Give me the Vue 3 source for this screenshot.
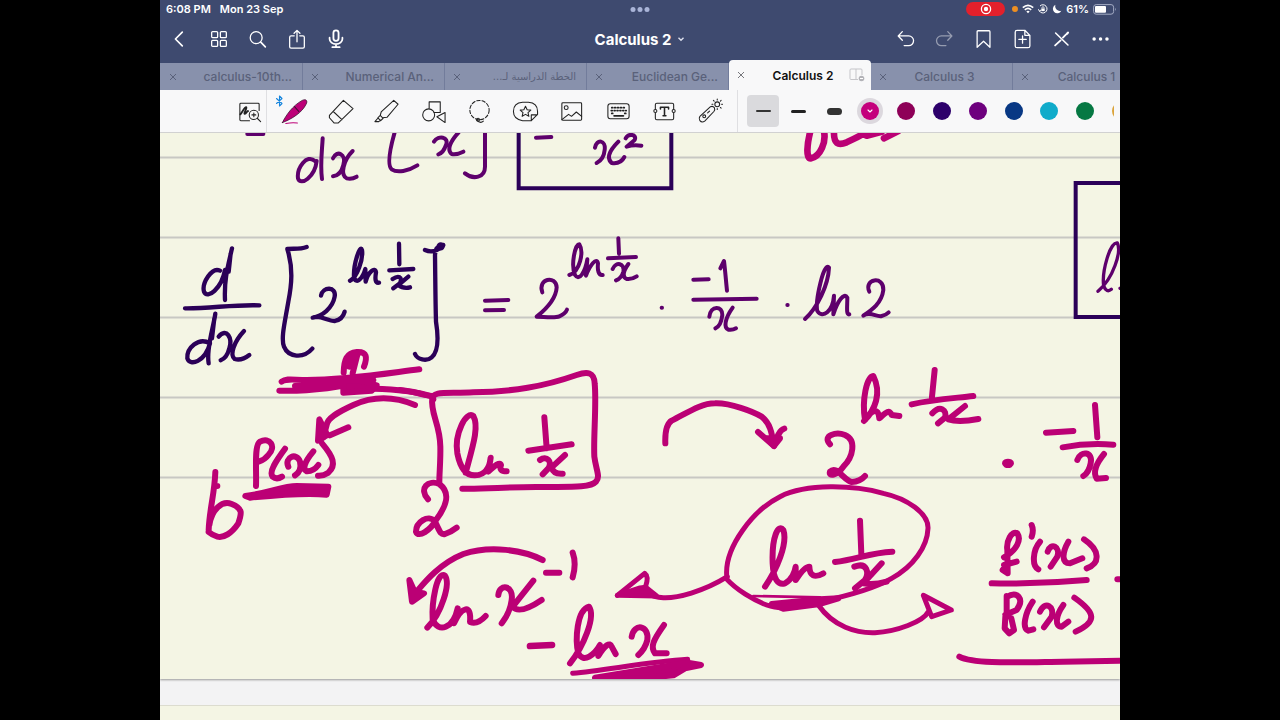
<script setup>
import { ref } from 'vue'

const tabs = [
  { name: 'calculus-10th...', long: true },
  { name: 'Numerical An...', long: true },
  { name: 'الخطة الدراسية لـ...', long: true, rtl: true },
  { name: 'Euclidean Ge...', long: true },
  { name: 'Calculus 2', active: true },
  { name: 'Calculus 3' },
  { name: 'Calculus 1' },
]
const swatches = [
  { name: 'Magenta', hex: '#c4007c' },
  { name: 'Raspberry', hex: '#8e0058' },
  { name: 'Indigo', hex: '#2d006b' },
  { name: 'Purple', hex: '#6e007e' },
  { name: 'Blue', hex: '#083884' },
  { name: 'Cyan', hex: '#10abca' },
  { name: 'Green', hex: '#067843' },
  { name: 'Amber', hex: '#dba43c' },
]
const picked = ref('Magenta')
const rules = [25, 105, 185, 265, 345]
</script>

<template>
  <main class="screen">
    <header class="top">
      <div class="status">
        <span class="time">6:08 PM</span>
        <span class="date">Mon 23 Sep</span>
        <span class="grabber"><i></i><i></i><i></i></span>
        <div class="system">
          <span class="rec"><svg width="12" height="12" viewBox="0 0 12 12"><circle cx="6" cy="6" r="4.6" fill="none" stroke="#fff" stroke-width="1.3" /><circle cx="6" cy="6" r="2.2" fill="#fff" /></svg></span>
          <i class="mic-dot"></i>
          <svg width="12" height="10" viewBox="0 0 12 10" fill="none" stroke="#fff" stroke-width="1.7"><path d="M.8 3.6Q6-1 11.2 3.6M2.8 5.8Q6 3 9.2 5.8" /><path d="M4.3 7.4Q6 6 7.7 7.4L6 9.3Z" fill="#fff" stroke="none" /></svg>
          <svg width="10" height="10" viewBox="0 0 10 10" fill="none" stroke="#fff"><path d="M2 2a4.1 4.1 0 1 1-.6 5M.4 5.3l1 1.8 1.7-1.2" /><rect x="3.3" y="4.5" width="3.4" height="2.6" fill="#fff" stroke="none" /><path d="M4 4.6V3.7a1 1 0 0 1 2 0v.9" stroke-width=".8" /></svg>
          <svg width="10" height="10" viewBox="0 0 10 10"><path d="M3.5.8A4.4 4.4 0 1 0 9.3 6.700A4.600 4.600 0 0 1 3.500.8Z" fill="#fff" /></svg>
          <span>61%</span>
          <svg width="24" height="11" viewBox="0 0 24 11"><rect x=".6" y=".6" width="20" height="9.600" rx="2.600" fill="none" stroke="#a3abc4" /><rect x="2" y="2" width="11" height="6.800" rx="1" fill="#fff" /><path d="M22 3.800q1.600 1.500 0 3.200z" fill="#a3abc4" /></svg>
        </div>
      </div>

      <nav class="bar">
        <div class="group">
          <button aria-label="Back"><svg viewBox="0 0 24 24"><path d="M14.500 4.500L7 12L14.500 19.500" stroke-width="1.800" /></svg></button>
          <button aria-label="Thumbnails"><svg viewBox="0 0 24 24"><rect x="4" y="4" width="6.500" height="6.500" rx="1" /><rect x="13.500" y="4" width="6.500" height="6.500" rx="1" /><rect x="4" y="13.500" width="6.500" height="6.500" rx="1" /><rect x="13.500" y="13.500" width="6.500" height="6.500" rx="1" /></svg></button>
          <button aria-label="Search"><svg viewBox="0 0 24 24"><circle cx="10" cy="10.500" r="6.500" /><path d="M15 15.500l5 5" stroke-width="1.800" /></svg></button>
          <button aria-label="Share"><svg viewBox="0 0 24 24"><path d="M9 8.500H5.500q-1.500 0-1.500 1.500V20.500q0 1.500 1.500 1.500H18.500q1.500 0 1.500-1.500V10q0-1.500-1.500-1.500H15M12 15V2.800M8.800 5.800L12 2.600L15.200 5.800" /></svg></button>
          <button aria-label="Record"><svg viewBox="0 0 24 24"><rect x="9.200" y="2.500" width="5.600" height="11.500" rx="2.800" stroke-width="2" /><path d="M5 10.500V12a7 5.500 0 0 0 14 0V10.500M12 17.500V20.500M8 20.900H16" stroke-width="1.900" /></svg></button>
        </div>
        <button class="title">Calculus 2 <svg width="8" height="8" viewBox="0 0 8 8"><path d="M1.500 2.800L4 5.200L6.500 2.800" fill="none" stroke="#dde1ee" stroke-width="1.400" /></svg></button>
        <div class="group">
          <button aria-label="Undo"><svg viewBox="0 0 24 24"><path d="M8 4L3.500 8.700L8 13.400M4 8.700H15a5 5 0 0 1 0 10.500H10" /></svg></button>
          <button aria-label="Redo" class="dim"><svg viewBox="0 0 24 24"><path d="M15 4L19.500 8.700L15 13.400M19 8.700H8a5 5 0 0 0 0 10.500H13" /></svg></button>
          <button aria-label="Bookmark"><svg viewBox="0 0 24 24"><path d="M4.500 21V4q0-1 1-1H17.500q1 0 1 1V21L11.500 14.500Z" /></svg></button>
          <button aria-label="Add page"><svg viewBox="0 0 24 24"><path d="M5.500 2.500H14L19.500 8V19.500q0 2-2 2H5.500q-2 0-2-2V4.500q0-2 2-2M14 2.500V8H19.500M11.500 8.500V16.500M7.500 12.500H15.500" /></svg></button>
          <button aria-label="Read only"><svg viewBox="0 0 24 24"><path d="M5 5.500L18.500 18.500" stroke-width="1.700" /><path d="M4.500 19L10.500 13.500M13 10.500L16.500 7" stroke-width="2" /><path d="M17.500 6.200L18.500 5" stroke-width="2.400" /></svg></button>
          <button aria-label="More"><svg viewBox="0 0 24 24" class="solid"><circle cx="4.500" cy="12" r="1.900" /><circle cx="11.500" cy="12" r="1.900" /><circle cx="18.500" cy="12" r="1.900" /></svg></button>
        </div>
      </nav>

      <div class="tabs">
        <div v-for="tab in tabs" :key="tab.name" class="tab" :class="{ active: tab.active, long: tab.long }">
          <button class="close" :aria-label="'Close ' + tab.name"><svg width="8" height="8" viewBox="0 0 8 8"><path d="M1 1L7 7M7 1L1 7" stroke="currentColor" /></svg></button>
          <button class="label" :dir="tab.rtl ? 'rtl' : 'ltr'">{{ tab.name }}</button>
          <svg v-if="tab.active" class="split" width="16" height="14" viewBox="0 0 16 14" fill="none" stroke="#c5c5c9"><path d="M9 11.500H2q-1 0-1-1V2q0-1 1-1H12q1 0 1 1V7M7 1V11.500" /><circle cx="12.500" cy="10.500" r="2.800" fill="#b3b3b8" stroke="none" /><path d="M11 10.500H14" stroke="#fff" /></svg>
        </div>
      </div>
    </header>

    <div class="toolbar">
      <button class="zoom" aria-label="Zoom window"><svg viewBox="0 0 28 28"><path d="M14 23.500H5q-1 0-1-1V6.500q0-1 1-1H23q1 0 1 1V13" /><path d="M4.500 17C7 14 9 9 10.500 9.500S7.500 16 9 16.500S11.500 13 12.500 13.500" stroke-width="1.900" /><circle cx="18.500" cy="17.500" r="4.800" /><path d="M22 21L25.500 24.500M16.500 17.500H20.500M18.500 15.500V19.500" /></svg></button>
      <div class="tools">
        <button aria-label="Pen">
          <svg class="bt" width="9" height="12" viewBox="0 0 9 12" fill="none"><path d="M1.500 3.500L7 8.500L4.500 11V1L7 3.500L1.500 8.500" /></svg>
          <svg viewBox="0 0 28 28"><path d="M1.500 25.500C5 18 12 8 22 2.500C26 .5 28 3 26 6.500C22 15 11 22 1.500 25.500Z" fill="#bd0078" stroke="#3b1030" stroke-width=".8" /><path d="M14 9L18.500 14" stroke="#3b1030" /><path d="M5 26.500Q12 25 17 26" stroke="#bd0078" /></svg>
        </button>
        <button aria-label="Eraser"><svg viewBox="0 0 28 28"><path d="M2.500 18L17 2.500L27 11L11.500 26H7.500L2.500 20.500ZM6.500 14L15.500 22.500" /></svg></button>
        <button aria-label="Highlighter"><svg viewBox="0 0 28 28"><path d="M8.500 14.500L21.500 2.500L26 6.500L14.500 20L10 20.500L7.500 18ZM7.500 18L5 20.500L8 23.500L10.500 21M5 21L2 24.500H6L8 23" /></svg></button>
        <button aria-label="Shapes"><svg viewBox="0 0 28 28"><path d="M9.500 10.500V4H21V15H14.500M17.500 19.500L26 15V25.500Z" /><circle cx="9" cy="17.500" r="6.200" /></svg></button>
        <button aria-label="Lasso"><svg viewBox="0 0 28 28"><circle cx="14" cy="12.500" r="10" stroke-dasharray="3.500 2" /><path d="M11 23Q15 27 18 24" /><circle cx="12.500" cy="22.500" r="1.500" /></svg></button>
        <button aria-label="Stickers"><svg viewBox="0 0 28 28"><path d="M20 23.500H11Q1.500 22 1.500 14Q1.500 5 11 4.500H17Q26.500 5 26.500 14V17L20 23.500V17.500H26" /><path d="M14 8.500L15.700 12.200L19.500 12.600L16.600 15.200L17.500 19L14 17L10.500 19L11.400 15.200L8.500 12.600L12.300 12.200Z" /></svg></button>
        <button aria-label="Image"><svg viewBox="0 0 28 28"><rect x="4" y="5" width="20.500" height="18" rx="1" /><circle cx="8.500" cy="10" r="2" /><path d="M4 22.500L11 17L14 19L19 14.500L24.500 19" /></svg></button>
        <button aria-label="Keyboard"><svg viewBox="0 0 28 28"><rect x="3" y="6" width="22" height="15.500" rx="2.500" /><path d="M7 10H22M6.500 13H22" stroke-width="1.800" stroke-dasharray="1 2" /><path d="M7 16H8M20.500 16H21.500" stroke-width="1.800" /><path d="M9.500 18.500H19" stroke-width="2" /></svg></button>
        <button aria-label="Text"><svg viewBox="0 0 28 28"><path d="M4.500 11.500V7q0-1.500 1.500-1.500H22q1.500 0 1.500 1.500V11.500M4.500 15.500V21q0 1.500 1.500 1.500H22q1.500 0 1.500-1.500V15.500" /><path d="M9.800 11.500V9.500H18.200V11.500M14 9.500V18.500M12.500 18.500H15.500" stroke-width="1.600" /><circle cx="4.500" cy="13.500" r="1.600" /><circle cx="23.500" cy="13.500" r="1.600" /></svg></button>
        <button aria-label="Laser pointer"><svg viewBox="0 0 28 28"><path d="M3 19L14 9Q16.500 8 18 10Q19 12 17.500 14L8 24Q5 26 3 23.500Q1.500 21 3 19Z" /><circle cx="7.500" cy="19" r="1.500" /><path d="M11 15.500L13 13.500" /><circle cx="21" cy="6.500" r="2.500" /><path d="M21 1V2M21 11V12M15.500 6.500H16.500M25.500 6.500H26.500M17 2.500L17.800 3.300M25 2.500L24.300 3.200M24.300 9.800L25 10.500" /></svg></button>
      </div>
      <div class="palette">
        <button class="stroke on" aria-label="Thin"><i></i></button>
        <button class="stroke mid" aria-label="Medium"><i></i></button>
        <button class="stroke fat" aria-label="Thick"><i></i></button>
        <button v-for="s in swatches" :key="s.name" class="swatch" :class="{ on: picked === s.name }" :aria-label="s.name" @click="picked = s.name">
          <svg width="26" height="26" viewBox="0 0 26 26"><circle cx="13" cy="13" r="9" :fill="s.hex" stroke="none" /><path v-if="picked === s.name" d="M11 12L13 14L15 12" fill="none" stroke="#fff" /></svg>
        </button>
      </div>
    </div>

    <section class="paper">
      <svg class="ink" viewBox="160 133 960 546" role="img" aria-label="Handwritten derivative of 2 to the power ln 1 over x">
        <g class="rules"><path v-for="y in rules" :key="y" :d="`M160 ${y + 132.500}H1120`" /></g>

        <g class="navy" transform="translate(160 125) scale(.33333)">
          <path d="M180 437C155 425 125 475 132 500C142 525 185 490 195 435M216 370C205 420 192 460 195 525M212 385L206 440" />
          <path d="M75 550C150 551 220 538 298 541" />
          <path d="M150 655C115 635 80 670 82 700C90 725 135 710 150 655M166 566C160 610 138 670 146 715M163 580L156 640" />
          <path d="M176 635C200 606 218 640 208 670C203 690 193 702 182 706M252 618C222 650 208 690 224 702Q245 708 268 690" />
          <path d="M440 366C420 374 400 370 382 372C400 430 395 480 385 530C375 590 362 640 372 665C385 697 430 702 457 671" />
          <path d="M483 512C488 484 530 484 524 515C518 550 485 574 458 578C480 568 505 590 525 588C540 585 550 575 554 560" />
          <path d="M570 467C592 458 610 400 606 375C600 355 580 420 582 455C588 482 608 460 616 432L617 470C625 440 645 425 648 442C645 460 645 475 657 473" />
          <path d="M717 356L718 418M688 436L760 432M698 462C715 450 728 455 720 475L700 490M745 455L715 480Q730 492 750 487" />
          <path d="M795 375C815 384 832 378 848 362M850 360C838 362 825 370 825 390C826 460 826 520 828 590C836 640 836 680 815 697C800 710 772 704 765 687" /><circle cx="842" cy="364" r="6" />
        </g>

        <g class="purple" transform="translate(160 125) scale(.33333)">
          <path d="M262 27H310M465 108C440 85 410 130 414 160C422 185 465 155 470 108M488 40C486 80 480 120 486 162" />
          <path d="M519 100C530 74 560 86 550 120C545 140 535 152 519 154M578 78C550 105 540 150 560 160Q575 164 590 155" />
          <path d="M706 15C690 70 680 120 695 133C712 145 745 138 772 121M822 50C835 30 868 35 858 60C852 78 845 85 835 88M896 22C870 50 860 75 875 87Q890 90 910 80" />
          <path d="M915 145C940 165 975 158 975 125V20" />
        </g>

        <g transform="translate(480 125) scale(.33333)">
          <path class="box" d="M116 15V190H574V15" />
          <g class="purple">
            <path d="M15 527L85 525M15 556L72 555M168 38L214 36" />
            <path d="M187 502C172 460 228 450 230 487C228 522 195 555 170 575C190 575 225 580 238 574C252 568 258 562 261 554" />
            <path d="M268 450C300 440 312 380 298 358C285 358 272 420 285 450C298 470 316 440 322 403L318 452C330 420 350 395 354 415C352 435 355 452 368 450" />
            <path d="M415 340L417 386M384 400L468 396M398 432C408 408 435 415 430 440C426 455 418 462 408 466M445 417C425 445 430 458 440 462Q455 464 470 454" />
            <path d="M345 68C350 40 378 45 374 75C372 95 362 108 350 114M415 50C385 80 380 100 395 114Q422 118 433 96M437 40C445 24 472 28 464 45L440 65Q460 58 484 62" />
            <path d="M545 548H546" />
          </g>
        </g>

        <g class="purple" transform="translate(680 125) scale(.33333)">
          <path d="M40 464L86 463M121 430L132 408C136 440 138 470 141 497M40 524L230 521" />
          <path d="M88 575C92 540 128 542 127 570C124 595 116 606 106 610M158 548C135 580 130 608 145 614Q158 616 168 610" />
          <path d="M322 540H323" />
          <path d="M375 582C412 548 445 480 447 428C432 405 405 530 412 558C428 582 458 560 462 512L460 568C472 530 492 500 502 518C502 545 498 570 508 568" />
          <path d="M568 500C550 462 612 450 610 495C605 535 575 555 550 572C570 558 590 577 605 573Q618 570 626 562" />
        </g>

        <g transform="translate(900 125) scale(.33333)">
          <path class="box" d="M670 174H527V576H670" />
          <path class="purple thin" d="M594 499C640 460 665 380 652 354C630 350 605 440 611 483Q620 505 634 493M660 490L666 488" />
        </g>

        <g class="pink" transform="translate(680 125) scale(.33333)">
          <path class="heavy" d="M392 15C380 60 378 100 392 100C420 96 442 50 430 12M462 15C460 58 475 62 500 52C520 43 545 30 570 15M560 32L605 20M612 40L655 18" />
        </g>

        <g class="pink" transform="translate(160 350) scale(.33333)">
          <path d="M551 68C552 30 560 8 590 6C622 4 622 24 612 50M578 70L592 14M568 50L576 16" />
          <path d="M365 95C380 84 400 90 440 90C560 90 680 70 778 58M358 122C450 125 540 112 640 90M405 108L570 94M640 116C710 118 780 128 812 138" />
          <path class="fill" d="M550 92H600L650 106L635 122L550 128Z" />
          <path d="M765 165C700 138 635 140 580 165C530 188 502 205 500 225L490 262M565 232L510 256" />
          <path class="fill" d="M478 208L474 272L502 255Z" />
          <path d="M288 408C290 360 282 285 300 275C330 260 350 290 325 315C315 328 305 332 298 334M375 296C350 330 325 365 338 380Q350 390 366 380" />
          <path d="M385 350C372 322 410 305 420 335C425 358 415 370 405 376M460 304C430 340 428 358 440 364Q460 365 475 345M486 280C520 320 530 345 505 368Q490 378 474 377" />
          <path class="fill" d="M256 438C320 430 370 408 410 408L505 410L500 434C440 428 340 436 270 443Z" />
          <path d="M166 366C164 430 148 480 146 540M148 525C155 480 185 450 215 462C250 476 245 490 235 520C215 550 190 565 172 560Q158 556 146 546M166 408H172" />
        </g>

        <g class="pink" transform="translate(400 360) scale(.33333)">
          <path d="M0 90C40 93 60 103 95 108M100 118C92 90 150 102 220 97C340 95 430 80 530 45C562 34 582 36 584 70C590 130 580 230 583 290C588 330 602 350 588 365C570 385 500 380 420 381C330 380 250 388 187 386" />
          <path d="M97 112C90 160 120 190 121 260C122 300 118 340 118 365" />
          <path d="M84 418C55 385 85 358 118 372C155 400 138 440 108 480C92 510 55 535 48 515C48 488 85 460 105 485C118 510 120 525 135 522Q155 515 170 503" />
          <path d="M197 338C218 260 238 200 220 168C200 150 162 220 172 280C182 330 200 347 225 346C260 345 270 315 272 293L265 335C285 316 300 305 303 315Q295 334 320 334" />
          <path d="M433 172L440 265M385 272L515 253M420 300C440 285 458 305 445 325L428 343M495 285L455 322Q460 343 488 341" />
        </g>

        <g class="pink" transform="translate(620 350) scale(.33333)">
          <path d="M136 280C135 250 138 222 155 212C200 190 240 160 285 160C330 158 400 185 425 200C450 220 455 245 462 288M414 246L462 288C470 262 478 240 493 236" />
          <path class="fill" d="M440 265L480 265L462 288Z" />
          <path d="M630 283C605 255 650 245 675 255C710 270 700 320 670 350C650 378 625 380 630 365C650 345 670 390 695 396Q720 395 735 378" />
          <path class="loop" d="M320 675C315 590 400 480 480 440C560 400 700 405 790 430C860 445 926 490 924 535C922 590 880 650 815 685C760 718 680 738 600 755C520 775 480 780 440 765C400 750 350 720 318 685" />
          <path class="fill" d="M455 762L600 748L655 745L600 762L490 776Z" /><path class="thin-pink" d="M400 738L600 742" />
          <path d="M435 710C470 660 504 580 490 540C475 520 455 560 458 640C460 690 475 706 495 700C515 690 525 665 527 650L527 690C540 670 555 650 568 650Q570 692 610 670" />
          <path d="M720 512L724 612M645 636C710 628 750 608 817 605M703 650C742 635 748 670 735 690L705 715M785 640L730 700Q760 706 800 695" />
        </g>

        <g class="pink" transform="translate(850 350) scale(.33333)">
          <path class="loop" d="M-95 765C-50 830 20 850 75 848C140 845 220 815 235 785M220 736L245 800L304 780Z" />
          <path d="M42 213C75 180 96 130 70 78C50 80 35 150 45 210C65 180 85 170 88 205C105 190 118 175 125 195L148 198" />
          <path d="M254 60L245 150M185 163C250 148 310 145 370 138M247 190C270 164 292 180 285 203L264 220M345 168L295 208Q325 218 385 207" />
          <ellipse class="fill" cx="474" cy="340" rx="9" ry="5" />
          <path d="M588 248L670 243M735 165L742 262M638 292C680 284 740 280 790 284M682 330C692 300 730 305 722 340C718 360 710 372 700 378M762 312C735 345 730 370 740 386L768 384" />
          <path d="M462 622C500 600 515 570 502 550C485 540 468 575 472 600L473 670L458 660M462 645L500 635M545 525Q552 540 545 560M570 575C548 600 545 648 565 658" />
          <path d="M593 605C602 575 632 590 622 620L602 650M655 575C635 610 635 640 660 640L697 625M702 568C750 600 752 640 710 655M425 700C520 702 620 698 710 690M802 688H818" />
          <path d="M470 738V800M472 740C500 722 525 745 500 780L466 794M466 800L464 835L478 850L492 840L484 805M548 755C525 790 515 835 535 842L550 838" />
          <path d="M570 785C585 750 615 770 605 800L582 832M640 765C615 800 615 830 635 830L655 815M673 743C740 790 740 815 677 845" />
          <path d="M328 920C370 943 500 937 640 935L820 932" />
        </g>

        <g class="pink" transform="translate(390 530) scale(.33333)">
          <path d="M458 90C400 60 300 45 220 72C150 100 105 155 80 185" />
          <path class="fill" d="M58 150L66 215L102 190L74 185Z" />
          <path d="M112 293C155 250 182 160 165 137C140 120 125 220 128 268C145 312 190 295 203 235L192 280C215 230 245 220 240 276Q262 285 287 258" />
          <path d="M325 195C328 160 372 165 365 210C360 250 345 265 335 280M430 152L368 230Q388 255 455 210M468 128H508M548 68Q560 100 548 142" />
          <path class="loop" d="M1012 140C940 185 860 205 820 203C800 202 785 198 770 190" />
          <path class="loop" d="M682 196L764 130Q778 140 766 172L720 190" />
          <path class="loop fill" d="M682 196L750 174L768 172L800 198Z" />
          <path class="heavy" d="M420 348L486 345" />
          <path d="M540 400C580 350 618 260 597 230C560 240 555 330 565 370C580 402 615 372 630 345L625 378C645 345 660 335 665 350L677 372" />
          <path d="M725 320C732 278 778 285 772 330C766 355 756 365 745 375M822 285C790 330 780 350 795 370L830 370" />
          <path class="loop" d="M548 430C650 420 780 395 893 388" />
          <path class="fill" d="M615 443L780 416L893 398L933 405L885 415L850 436L750 445Z" />
        </g>
      </svg>
    </section>
    <section class="next"></section>
  </main>
</template>

<style>
body { background: #000; }
</style>

<style scoped>
.screen { box-sizing: border-box; margin: 0 12.5%; height: 100vh; overflow: hidden; display: flex; flex-direction: column; background: #f3f3f4; font-family: Inter, "Liberation Sans", "DejaVu Sans", sans-serif; }
button { border: 0; padding: 0; margin: 0; background: none; font: inherit; color: inherit; }
svg { flex: none; }
.top { flex: none; background: #3e4a6f; color: #fff; }
.status { position: relative; display: flex; align-items: center; height: 18px; padding: 0 3px 0 6px; font-size: 11px; font-weight: 600; }
.date { margin-left: 9px; }
.grabber { position: absolute; left: 50%; transform: translateX(-50%); display: flex; gap: 2px; }
.grabber i { width: 5px; height: 5px; border-radius: 50%; background: #a9b4d8; }
.system { margin-left: auto; display: flex; align-items: center; gap: 4px; }
.rec { width: 39px; height: 14px; margin-right: 3px; border-radius: 7px; background: #e3202b; display: flex; align-items: center; justify-content: center; }
.mic-dot { width: 6px; height: 6px; border-radius: 50%; background: #ee8f22; }
.bar { display: grid; grid-template-columns: 1fr auto 1fr; align-items: center; height: 42px; }
.group { display: flex; }
.group:last-child { justify-content: flex-end; }
.group button { width: 39px; height: 40px; display: flex; align-items: center; justify-content: center; }
.group svg { width: 22px; height: 22px; fill: none; stroke: #fff; stroke-width: 1.4; stroke-linecap: round; stroke-linejoin: round; }
.group .solid { fill: #fff; stroke: none; }
.dim { opacity: .45; }
.title { display: flex; align-items: center; gap: 6px; font-size: 15px; font-weight: 700; }
.tabs { display: flex; align-items: flex-end; height: 30px; padding-left: 1px; background: linear-gradient(#3e4a6f 3px, #8891ac 3px); overflow: hidden; }
.tab { flex: none; box-sizing: border-box; position: relative; width: 142px; height: 27px; display: flex; align-items: center; padding: 0 10px 0 8px; background: #8891ac; border-right: 1px solid #727c9b; color: #5a617a; font-size: 12px; font-weight: 500; }
.close { display: flex; width: 8px; }
.label { flex: 1; text-align: center; white-space: nowrap; -webkit-text-stroke: 0; }
.long .label { text-align: right; }
.long .label[dir="rtl"] { text-align: right; font-family: "DejaVu Sans", sans-serif; font-size: 10px; }
.tab.active { height: 30px; background: #f8f8f9; border: 0; border-radius: 4px 4px 0 0; color: #111; font-weight: 600; }
.active .close { color: #77777c; }
.split { position: absolute; right: 6px; top: 8px; }
.toolbar { flex: none; display: flex; align-items: center; height: 42px; padding: 0 6px 0 72px; background: #f8f8f9; border-bottom: 1px solid #d5d5d5; }
.toolbar button { display: flex; align-items: center; justify-content: center; height: 42px; }
.toolbar button > svg { width: 27px; height: 27px; fill: none; stroke: #222; stroke-width: 1.1; stroke-linecap: round; stroke-linejoin: round; }
.toolbar .swatch > svg { width: 26px; height: 26px; }
.zoom { width: 35px; border-right: 1px solid #dfdfe2; }
.tools { flex: 1; display: grid; grid-template-columns: repeat(10, 1fr); margin-left: 4px; padding-right: 3px; border-right: 1px solid #dfdfe2; }
.tools button { position: relative; }
.toolbar .tools .bt { position: absolute; left: 4px; top: 5px; width: 9px; height: 12px; stroke: #1685dd; }
.palette { flex: none; display: flex; width: 369px; margin-left: 7px; overflow: hidden; }
.palette button { flex: none; width: 9.7%; }
.palette .stroke.on { width: 32px; height: 32px; margin: 5px 2px; border-radius: 4px; background: #dadadd; }
.stroke i { width: 15px; height: 2px; border-radius: 4px; background: #333; }
.stroke.mid i { height: 3px; background: #222; }
.stroke.fat i { height: 7px; background: #333; }
.swatch.on svg { border-radius: 50%; background: #dcd8de; }
.paper { flex: none; background: #f4f5e4; box-shadow: 0 1px 2px #999; }
.ink { display: block; width: 100%; height: auto; fill: none; stroke-linecap: round; stroke-linejoin: round; }
.rules { stroke: #c8c8c3; stroke-width: 2; }
.box { stroke: #2b0058; stroke-width: 12; stroke-linejoin: miter; }
.navy { stroke: #2b0058; stroke-width: 13; }
.navy circle { fill: #2b0058; }
.purple { stroke: #5e006c; stroke-width: 12; }
.purple.thin { stroke-width: 10; }
.pink { stroke: #bb0075; stroke-width: 18; }
.pink .fill { fill: #bb0075; }
.pink .loop { stroke-width: 15; }
.pink .thin-pink { stroke-width: 8; }
.pink .heavy { stroke-width: 20; }
.next { flex: 1; margin-top: 26px; background: #f4f5e4; border-top: 1px solid #dcdccf; }
</style>
